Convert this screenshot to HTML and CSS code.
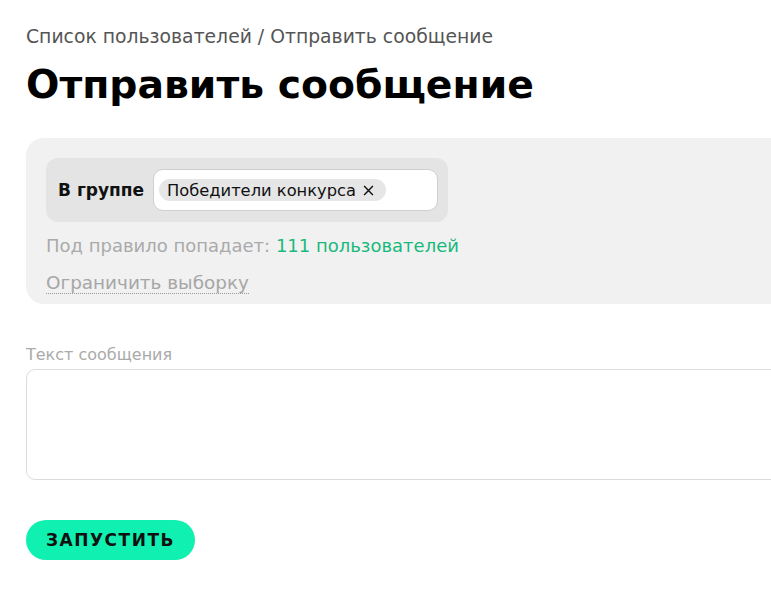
FILE: index.html
```html
<!DOCTYPE html>
<html lang="ru">
<head>
<meta charset="utf-8">
<link rel="stylesheet" href="styles.css">
</head>
<body>
<div class="page">
  <div class="crumbs">Список пользователей / Отправить сообщение</div>
  <h1 class="title">Отправить сообщение</h1>
  <div class="rule-panel">
    <div class="group-box">
      <span class="group-label">В группе</span>
      <div class="tag-input">
        <span class="chip">Победители конкурса <span class="chip-x">
          <svg width="11" height="11" viewBox="0 0 10 10"><path d="M1 1L9 9M9 1L1 9" stroke="#111" stroke-width="1.3" fill="none"/></svg>
        </span></span>
      </div>
    </div>
    <div class="count">Под правило попадает: <span class="count-num">111 пользователей</span></div>
    <div class="limit"><span class="limit-link">Ограничить выборку</span></div>
  </div>
  <div class="field-label">Текст сообщения</div>
  <div class="textarea"></div>
  <button class="run-btn">ЗАПУСТИТЬ</button>
</div>
</body>
</html>
```
FILE: styles.css
```css
html, body {
  margin: 0;
  padding: 0;
  background: #fff;
}
body {
  font-family: "DejaVu Sans", "Noto Sans", sans-serif;
  color: #111;
  overflow: hidden;
}
.page {
  padding: 24px 0 0 26px;
  width: 745px;
  overflow: hidden;
}
.crumbs {
  font-size: 18.8px;
  line-height: 26px;
  color: #555;
}
.title {
  margin: 10px 0 0;
  font-size: 39.3px;
  line-height: 50px;
  font-weight: 700;
  color: #000;
}
.rule-panel {
  margin-top: 28px;
  margin-right: -40px;
  background: #f1f1f1;
  border-radius: 18px;
  padding: 20px 20px 10px 20px;
  height: 136px;
}
.group-box {
  display: inline-flex;
  align-items: center;
  gap: 9px;
  background: #e4e4e4;
  border-radius: 12px;
  padding: 11px 10px 11px 12px;
}
.group-label {
  font-size: 17px;
  font-weight: 700;
  color: #111;
}
.tag-input {
  width: 278px;
  height: 40px;
  background: #fff;
  border: 1px solid #cfcfcf;
  border-radius: 10px;
  display: flex;
  align-items: center;
  padding-left: 5px;
}
.chip {
  display: inline-flex;
  align-items: center;
  gap: 7px;
  background: #e6e6e6;
  border-radius: 11px;
  height: 22px;
  padding: 0 12px 0 8px;
  font-size: 16.3px;
  color: #111;
}
.chip-x { display: inline-flex; }
.count {
  margin-top: 13px;
  font-size: 18px;
  line-height: 22px;
  color: #aaa;
}
.count-num { color: #19b97c; }
.limit {
  margin-top: 15px;
  font-size: 18.4px;
  line-height: 22px;
  color: #a6a6a6;
}
.limit-link {
  border-bottom: 1px dotted #999;
}
.field-label {
  margin-top: 41px;
  font-size: 16px;
  color: #aaa;
  line-height: 20px;
}
.textarea {
  margin-top: 4px;
  margin-right: -40px;
  height: 109px;
  border: 1px solid #dcdcdc;
  border-radius: 9px;
  background: #fff;
}
.run-btn {
  display: block;
  margin-top: 40px;
  width: 169px;
  height: 40px;
  border: none;
  border-radius: 20px;
  background: #10f0b0;
  font-family: "DejaVu Sans", sans-serif;
  font-size: 17px;
  font-weight: 700;
  letter-spacing: 1.5px;
  color: #111;
  cursor: pointer;
}
```
